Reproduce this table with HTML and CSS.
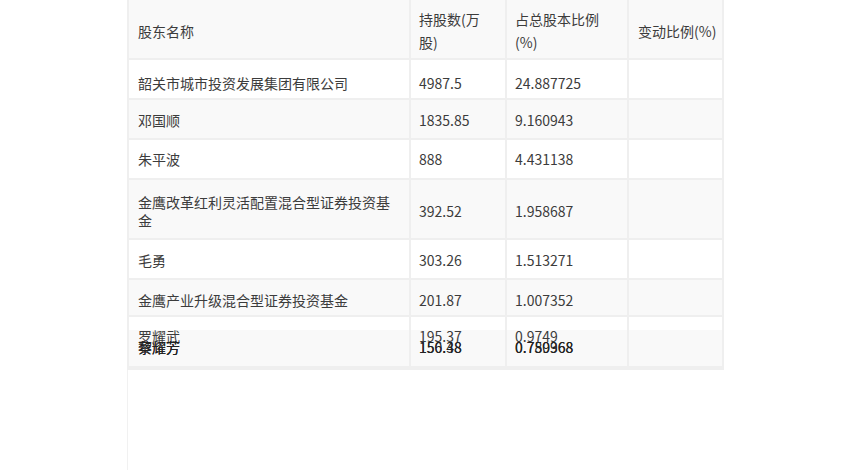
FILE: index.html
```html
<!DOCTYPE html>
<html lang="zh-CN">
<head>
<meta charset="utf-8">
<title>股东持股</title>
<link rel="stylesheet" href="styles.css">
</head>
<body>
<div class="wrap">
  <table class="holders">
    <colgroup>
      <col class="c-name">
      <col class="c-num">
      <col class="c-pct">
      <col class="c-chg">
    </colgroup>
    <thead>
      <tr class="head">
        <th class="first">股东名称</th>
        <th>持股数(万股)</th>
        <th class="pct">占总股本比例(%)</th>
        <th class="chg">变动比例(%)</th>
      </tr>
    </thead>
    <tbody>
      <tr class="r1 odd">
        <td class="first">韶关市城市投资发展集团有限公司</td>
        <td>4987.5</td>
        <td>24.887725</td>
        <td></td>
      </tr>
      <tr class="r2 even">
        <td class="first">邓国顺</td>
        <td>1835.85</td>
        <td>9.160943</td>
        <td></td>
      </tr>
      <tr class="r3 odd">
        <td class="first">朱平波</td>
        <td>888</td>
        <td>4.431138</td>
        <td></td>
      </tr>
      <tr class="r4 even">
        <td class="first">金鹰改革红利灵活配置混合型证券投资基金</td>
        <td>392.52</td>
        <td>1.958687</td>
        <td></td>
      </tr>
      <tr class="r5 odd">
        <td class="first">毛勇</td>
        <td>303.26</td>
        <td>1.513271</td>
        <td></td>
      </tr>
      <tr class="r6 even">
        <td class="first">金鹰产业升级混合型证券投资基金</td>
        <td>201.87</td>
        <td>1.007352</td>
        <td></td>
      </tr>
      <tr class="r7">
        <td class="first"><div class="stack"><span class="hi">罗耀武</span><span class="lo">黎耀芳</span><span class="lo">蔡耀芳</span></div></td>
        <td><div class="stack"><span class="hi">195.37</span><span class="lo">156.48</span><span class="lo">150.38</span></div></td>
        <td><div class="stack"><span class="hi">0.9749</span><span class="lo">0.780968</span><span class="lo">0.759368</span></div></td>
        <td></td>
      </tr>
    </tbody>
  </table>
</div>
</body>
</html>
```

FILE: styles.css
```css
html, body {
  margin: 0;
  padding: 0;
  background: #ffffff;
}

body {
  font-family: "Noto Sans CJK SC", "Noto Sans", sans-serif;
  font-size: 14px;
  color: #3c3c3c;
}

.wrap {
  margin-left: 127px;
  width: 596px;
  min-height: 472px;
  border-left: 1px solid #f1f1f1;
  box-sizing: border-box;
}

.holders {
  margin-left: -1px;
  margin-top: -2px;
  width: 597px;
  table-layout: fixed;
  border-collapse: separate;
  border-spacing: 2px;
  background: #efefef;
  padding-bottom: 2px;
}

.c-name { width: 280px; }
.c-num { width: 94px; }
.c-pct { width: 120px; }
.c-chg { width: 93px; }

th, td {
  text-align: left;
  font-weight: normal;
  padding: 0 10px 0 8px;
  line-height: 18px;
  vertical-align: middle;
  overflow: hidden;
}

th.first, td.first {
  padding-left: 9px;
}

th.pct {
  padding-right: 16px;
}

th.chg {
  padding-left: 9px;
  padding-right: 2px;
  white-space: nowrap;
}

.head th {
  background: #f9f9f9;
  line-height: 23px;
  padding-top: 8px;
  padding-bottom: 4px;
}

.head { height: 58px; }

.odd td { background: #ffffff; }
.even td { background: #f9f9f9; }

.r1 { height: 38px; }
.r1 td { padding-top: 8px; }
.r2 { height: 38px; }
.r2 td { padding-top: 2px; }
.r3 { height: 38px; }
.r4 { height: 58px; }
.r4 td { padding-top: 4px; }
.r5 { height: 38px; }
.r5 td { padding-top: 2px; }
.r6 { height: 35px; }
.r6 td { padding-top: 4px; }

.r7 { height: 49px; }
.r7 td {
  vertical-align: top;
  padding-top: 10px;
  background: linear-gradient(#ffffff 13px, #f9f9f9 13px);
}

.stack {
  display: grid;
}

.stack span {
  grid-area: 1 / 1;
  white-space: nowrap;
}

.stack .lo {
  margin-top: 11px;
  color: #222222;
}
```
